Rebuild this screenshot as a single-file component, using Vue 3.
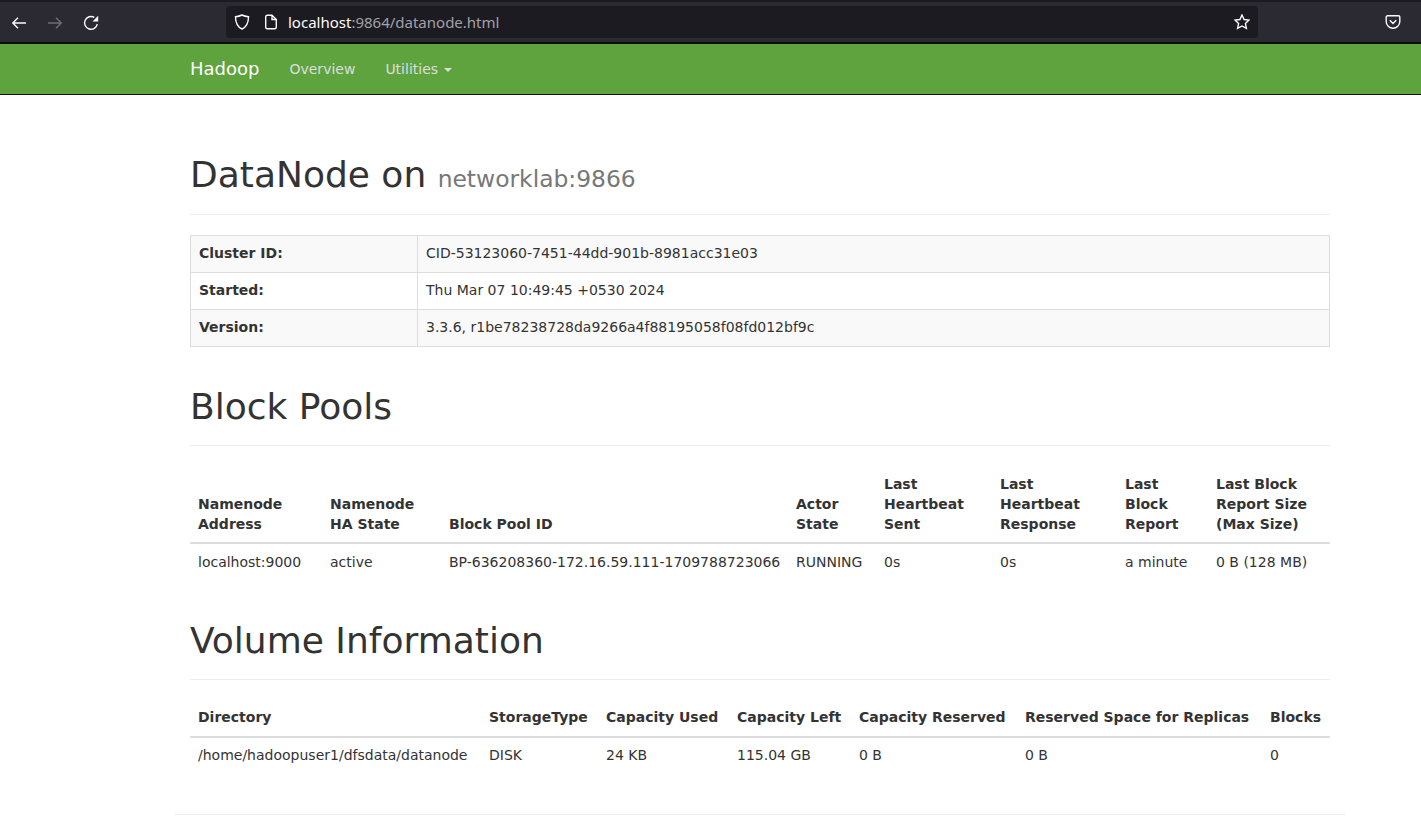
<template>
  <div class="page">
    <div class="browser-bar">
      <div class="nav-icons">
        <svg class="icon" viewBox="0 0 16 16"><path d="M15 8H1.800M7 2.800L1.800 8 7 13.200" /></svg>
        <svg class="icon dim" viewBox="0 0 16 16"><path d="M1 8h13.200M9 2.800L14.200 8 9 13.200" /></svg>
        <svg class="icon" viewBox="0 0 16 16">
          <path d="M14.300 9A6.400 6.400 0 1 1 11.300 2.400" />
          <path class="solid" d="M15.200.8v5.700H9.500z" />
        </svg>
      </div>
      <div class="url-bar">
        <svg class="icon shield" viewBox="0 0 16 16"><path d="M8 1C6 2 3.800 2.500 1.500 2.700c0 5.300 1.200 9.800 6.500 12.300 5.300-2.500 6.500-7 6.500-12.300C12.200 2.500 10 2 8 1z" /></svg>
        <svg class="icon page-icon" viewBox="0 0 16 16"><path d="M2.700 2.700A1.500 1.500 0 0 1 4.200 1.200H9l4.300 4.300v7.800a1.500 1.500 0 0 1-1.500 1.500H4.200a1.500 1.500 0 0 1-1.500-1.500zM9 1.200v4.300h4.300" /></svg>
        <span class="url"><span class="host">localhost</span>:9864/datanode.html</span>
        <svg class="icon star" viewBox="0 0 16 16"><path d="M8 1l2.100 4.500 4.900.6-3.600 3.400 1 4.900L8 12l-4.400 2.400 1-4.900L1 6.100l4.900-.6z" /></svg>
      </div>
      <svg class="icon pocket" viewBox="0 0 16 16"><path d="M2.500 1.800h11a1.300 1.300 0 0 1 1.300 1.300v4.400a6.800 6.800 0 0 1-13.600 0V3.100a1.300 1.300 0 0 1 1.300-1.300zM4.800 6.300L8 9.500l3.200-3.200" /></svg>
    </div>

    <nav class="navbar">
      <div class="container nav-inner">
        <a class="brand">Hadoop</a>
        <a class="nav-link">Overview</a>
        <a class="nav-link">Utilities <span class="caret"></span></a>
      </div>
    </nav>

    <div class="container main">
      <div class="page-header first">
        <h1>DataNode on <small>networklab:9866</small></h1>
      </div>
      <table class="info">
        <tbody>
          <tr v-for="row in info" :key="row.label">
            <th>{{ row.label }}</th>
            <td>{{ row.value }}</td>
          </tr>
        </tbody>
      </table>

      <div class="page-header">
        <h1>Block Pools</h1>
      </div>
      <table class="data pools">
        <colgroup>
          <col v-for="w in poolCols" :key="w.id" :style="{ width: w.px + 'px' }" />
        </colgroup>
        <thead>
          <tr>
            <th v-for="h in poolHeads" :key="h" v-html="h"></th>
          </tr>
        </thead>
        <tbody>
          <tr>
            <td v-for="c in poolRow" :key="c">{{ c }}</td>
          </tr>
        </tbody>
      </table>

      <div class="page-header volume-head">
        <h1>Volume Information</h1>
      </div>
      <table class="data volumes">
        <colgroup>
          <col v-for="w in volumeCols" :key="w.id" :style="{ width: w.px + 'px' }" />
        </colgroup>
        <thead>
          <tr>
            <th v-for="h in volumeHeads" :key="h">{{ h }}</th>
          </tr>
        </thead>
        <tbody>
          <tr>
            <td v-for="(c, i) in volumeRow" :key="i">{{ c }}</td>
          </tr>
        </tbody>
      </table>

      <hr class="foot" />
    </div>
  </div>
</template>

<script setup>
const info = [
  { label: 'Cluster ID:', value: 'CID-53123060-7451-44dd-901b-8981acc31e03' },
  { label: 'Started:', value: 'Thu Mar 07 10:49:45 +0530 2024' },
  { label: 'Version:', value: '3.3.6, r1be78238728da9266a4f88195058f08fd012bf9c' }
]

const toCols = (list) => list.map((px, id) => ({ id, px }))

const poolCols = toCols([132, 119, 347, 88, 116, 125, 91, 122])
const poolHeads = [
  'Namenode<br>Address',
  'Namenode<br>HA State',
  'Block Pool ID',
  'Actor<br>State',
  'Last<br>Heartbeat<br>Sent',
  'Last<br>Heartbeat<br>Response',
  'Last<br>Block<br>Report',
  'Last Block<br>Report Size<br>(Max Size)'
]
const poolRow = [
  'localhost:9000',
  'active',
  'BP-636208360-172.16.59.111-1709788723066',
  'RUNNING',
  '0s',
  '0s ',
  'a minute',
  '0 B (128 MB)'
]

const volumeCols = toCols([291, 117, 131, 122, 166, 245, 68])
const volumeHeads = [
  'Directory',
  'StorageType',
  'Capacity Used',
  'Capacity Left',
  'Capacity Reserved',
  'Reserved Space for Replicas',
  'Blocks'
]
const volumeRow = ['/home/hadoopuser1/dfsdata/datanode', 'DISK', '24 KB', '115.04 GB', '0 B', '0 B', '0']
</script>

<style>
html, body {
  margin: 0;
  background: #fff;
}
</style>

<style scoped>
.page {
  font-family: "DejaVu Sans", sans-serif;
  font-size: 14px;
  line-height: 20px;
  color: #333;
  height: 828px;
  overflow: hidden;
}

.browser-bar {
  height: 42px;
  box-sizing: border-box;
  border-top: 2px solid #1c1b22;
  background: #2b2a33;
  display: flex;
  align-items: center;
}
.nav-icons {
  display: flex;
  gap: 20px;
  margin-left: 11px;
  width: 215px;
  padding-top: 1px;
}
.icon {
  width: 16px;
  height: 16px;
  fill: none;
  stroke: #fbfbfe;
  stroke-width: 1.4;
  flex: none;
}
.icon.dim {
  stroke: #6f6e75;
}
.solid {
  fill: #fbfbfe;
  stroke: none;
}
.url-bar {
  width: 1032px;
  height: 32px;
  background: #1c1b22;
  border-radius: 4px;
  display: flex;
  align-items: center;
  box-sizing: border-box;
  padding: 0 8px;
  color: #a2a1a7;
  font-family: "Noto Sans", sans-serif;
  font-size: 15px;
}
.page-icon {
  margin-left: 13px;
}
.url {
  margin-left: 9px;
  flex: 1;
}
.host {
  color: #fbfbfe;
}
.pocket {
  margin-left: 127px;
}

.navbar {
  background: #5fa33e;
  height: 53px;
  box-sizing: border-box;
  border-top: 2px solid #0c0c0d;
  border-bottom: 1px solid #111;
}
.container {
  width: 1140px;
  margin-left: 190px;
}
.nav-inner {
  display: flex;
  align-items: center;
  height: 50px;
}
.brand {
  color: #fff;
  font-size: 18px;
  margin-right: 30px;
}
.nav-link {
  color: #ddd;
  margin-right: 30px;
}
.caret {
  display: inline-block;
  margin-left: 1px;
  vertical-align: middle;
  border-top: 4px solid #ddd;
  border-left: 4px solid transparent;
  border-right: 4px solid transparent;
}

.page-header {
  padding-bottom: 9px;
  margin: 40px 0 20px;
  border-bottom: 1px solid #eee;
}
.page-header.first {
  margin-top: 60px;
}
h1 {
  font-size: 36px;
  font-weight: 500;
  line-height: 1.1;
  margin: 20px 0 10px;
  color: #333;
}
.volume-head h1 {
  margin-bottom: 9px;
  padding-top: 1px;
}
h1 small {
  font-size: 23.400px;
  font-weight: 400;
  color: #777;
}

table {
  width: 100%;
  border-collapse: collapse;
  border-spacing: 0;
  table-layout: fixed;
}
th {
  text-align: left;
  font-weight: 700;
}
.info th,
.info td {
  padding: 7px 8px 9px;
  border: 1px solid #ddd;
  vertical-align: top;
}
.info th {
  width: 210px;
}
.info tr:nth-child(odd) {
  background: #f9f9f9;
}
.data th {
  padding: 8px;
  vertical-align: bottom;
  border-bottom: 2px solid #ddd;
}
.data td {
  padding: 8px;
  vertical-align: top;
  white-space: nowrap;
}
.volumes th,
.volumes td {
  padding: 7px 8px 9px;
}
.foot {
  border: 0;
  border-top: 1px solid #eee;
  margin: 40px -15px 0;
}
</style>
